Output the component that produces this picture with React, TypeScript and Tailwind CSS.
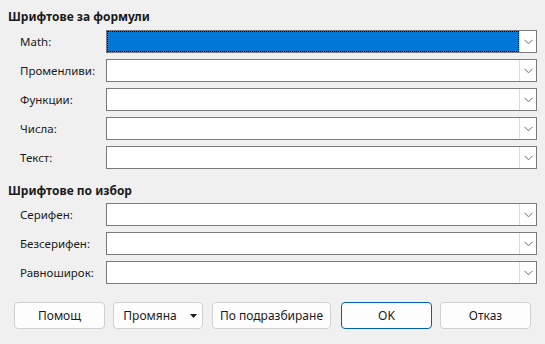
import React from "react";

const font = { fontFamily: '"Noto Sans", "Open Sans", sans-serif' };

function Chevron() {
  return (
    <svg width="9" height="6" viewBox="0 0 9 6" className="block">
      <path d="M0.5 0.8 L4.5 4.8 L8.5 0.8" fill="none" stroke="#6a6a6a" strokeWidth="1" />
    </svg>
  );
}

function Combo({ label, selected }: { label: string; selected?: boolean }) {
  return (
    <div className="flex items-center h-[23px] pl-[20px]">
      <div className="w-[86px] text-[11.5px] text-[#1a1a1a] leading-[16px]">{label}</div>
      <div className="w-[431px] h-[23px] border border-[#7a7a7a] bg-white flex">
        {selected ? (
          <div className="flex-1 border border-dotted border-black bg-[#0078d7]" />
        ) : (
          <div className="flex-1" />
        )}
        <div className="w-[17px] border-l border-[#dcdcdc] flex items-center justify-center">
          <Chevron />
        </div>
      </div>
    </div>
  );
}

function Btn({ w, children, primary, ml }: { w: string; children: React.ReactNode; primary?: boolean; ml?: string }) {
  return (
    <div
      className={
        "h-[27px] rounded-[4px] flex items-center justify-center text-[12px] text-[#1a1a1a] bg-[#fdfdfd] border " +
        (primary ? "border-[#005fb8] " : "border-[#d0d0d0] ") +
        w +
        " " +
        (ml || "")
      }
    >
      {children}
    </div>
  );
}

export default function App() {
  return (
    <div className="w-[545px] h-[344px] bg-[#f0f0f0] flex flex-col" style={font}>
      <div className="pt-[9px] pl-[8px] h-[25px] text-[12px] font-bold leading-[16px] text-[#1a1a1a]">
        Шрифтове за формули
      </div>
      <div className="mt-[5px] flex flex-col gap-[6px]">
        <Combo label="Math:" selected />
        <Combo label="Променливи:" />
        <Combo label="Функции:" />
        <Combo label="Числа:" />
        <Combo label="Текст:" />
      </div>
      <div className="mt-[14px] pl-[8px] h-[16px] text-[12px] font-bold leading-[16px] text-[#1a1a1a]">
        Шрифтове по избор
      </div>
      <div className="mt-[4px] flex flex-col gap-[6px]">
        <Combo label="Серифен:" />
        <Combo label="Безсерифен:" />
        <Combo label="Равноширок:" />
      </div>
      <div className="mt-[18px] flex pl-[14px]">
        <Btn w="w-[91px]">Помощ</Btn>
        <Btn w="w-[90px]" ml="ml-[8px]">
          <span className="ml-[4px]">Промяна</span>
          <svg width="7" height="4" viewBox="0 0 7 4" className="ml-[13px]">
            <path d="M0 0 L7 0 L3.5 4 Z" fill="#1a1a1a" />
          </svg>
        </Btn>
        <Btn w="w-[119px]" ml="ml-[9px]">По подразбиране</Btn>
        <Btn w="w-[91px]" ml="ml-[10px]" primary>OK</Btn>
        <Btn w="w-[91px]" ml="ml-[8px]">Отказ</Btn>
      </div>
    </div>
  );
}
